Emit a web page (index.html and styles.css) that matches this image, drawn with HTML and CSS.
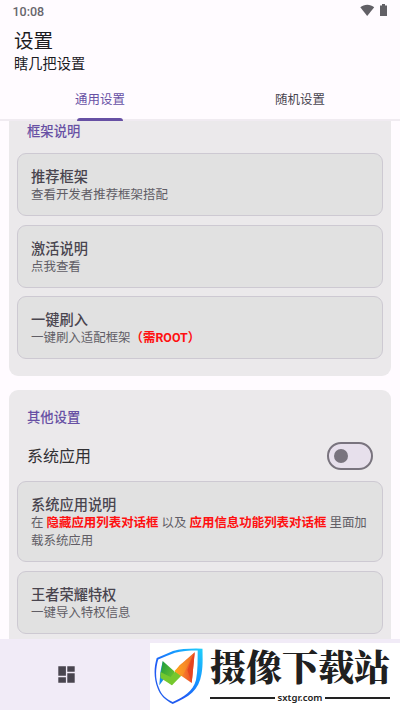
FILE: index.html
```html
<!DOCTYPE html>
<html lang="zh-CN">
<head>
<meta charset="utf-8">
<title>设置</title>
<link rel="stylesheet" href="styles.css">
</head>
<body>
<div class="screen">
  <header class="header">
    <div class="status">
      <span class="time">10:08</span>
      <svg class="status-icons" width="28" height="14" viewBox="0 0 28 14">
        <path d="M.3 3.300C4-.1 10.500-.1 14.200 3.300L7.200 12Z" fill="#626066"/>
        <path d="M20 1.400h2V0h3v1.400h2V12h-7z" fill="#626066"/>
      </svg>
    </div>
    <h1 class="title">设置</h1>
    <p class="subtitle">瞎几把设置</p>
    <nav class="tabs">
      <div class="tab active">通用设置</div>
      <div class="tab">随机设置</div>
    </nav>
  </header>
  <main class="content">
    <section class="card card-first">
      <h2 class="section-title">框架说明</h2>
      <div class="items">
        <div class="item"><h3>推荐框架</h3><p>查看开发者推荐框架搭配</p></div>
        <div class="item"><h3>激活说明</h3><p>点我查看</p></div>
        <div class="item"><h3>一键刷入</h3><p>一键刷入适配框架<b>（需ROOT）</b></p></div>
      </div>
    </section>
    <section class="card card-second">
      <h2 class="section-title">其他设置</h2>
      <div class="switch-row"><span>系统应用</span><div class="switch"><i></i></div></div>
      <div class="items">
        <div class="item"><h3>系统应用说明</h3><p>在 <b>隐藏应用列表对话框</b> 以及 <b>应用信息功能列表对话框</b> 里面加载系统应用</p></div>
        <div class="item"><h3>王者荣耀特权</h3><p>一键导入特权信息</p></div>
      </div>
    </section>
  </main>
  <footer class="bottom">
    <div class="nav-item">
      <svg width="17" height="17" viewBox="0 0 17 17" fill="#49454f">
        <path d="M.3.300h7.600v9.400H.3zM9.300.300h7.400v5.500H9.300zM.3 11.200h7.600v5.500H.3zM9.300 7.200h7.400v9.500H9.300z"/>
      </svg>
    </div>
    <div class="brand">
      <svg class="shield" width="50" height="57" viewBox="0 0 50 57">
        <defs>
          <linearGradient id="edge" x1="0" y1="1" x2="1" y2="0"><stop offset="0" stop-color="#2264e8"/><stop offset=".35" stop-color="#2159f5"/><stop offset=".65" stop-color="#1594ff"/><stop offset="1" stop-color="#20d0fa"/></linearGradient>
          <linearGradient id="warm" x1="0" y1="0" x2="1" y2="0"><stop offset="0" stop-color="#ffa01c"/><stop offset=".5" stop-color="#f4762a"/><stop offset="1" stop-color="#e63a22"/></linearGradient>
          <linearGradient id="leaf" x1="0" y1="0" x2="1" y2="1"><stop offset="0" stop-color="#189a3e"/><stop offset="1" stop-color="#7fcc2b"/></linearGradient>
        </defs>
        <path fill="url(#edge)" fill-rule="evenodd" d="M2.700 10Q11 6.500 19 3 31 0 48.500.7C48.600 10 49 18 47.500 26 45 42 35 49 18.700 56 11 52 6 47 3.500 40 0 31-.5 21 2.700 10zM4.200 11.500C1.500 21 1 31 5 40 7.500 47 12 51 18.700 54 30 49 39 43 42 32 44 22 43.500 12 43.700 2.500 35 2.500 27 3 21 4.700Q12 8 4.200 11.500z"/>
        <path fill="#178ce8" d="M8.700 13 6.500 23.500 5.300 37.300 10 31z"/>
        <path fill="url(#leaf)" d="M8.700 13 20.500 23.500 18 37.300 6.500 28z"/>
        <path fill="#75c82e" d="m6.500 24 10 5 5-6 6.500 4-10 10.300L6.500 30z"/>
        <path fill="#ffb01f" d="m20.500 23 7.200-7.500L27 28z"/>
        <path fill="url(#warm)" d="M40.700 4.300 25.500 17.500 21 23.500 37.700 35z"/>
        <path fill="#e64520" d="M40.700 4.300 33.500 22 37.700 35z"/>
        <path fill="#ffb51f" d="m21 23.500 7.500 4.500L40.700 4.300 27 17z" opacity=".35"/>
      </svg>
      <div class="brand-text">
        <div class="brand-name">摄像下载站</div>
        <div class="brand-url"><span>sxtgr.com</span></div>
      </div>
    </div>
  </footer>
</div>
</body>
</html>
```

FILE: styles.css
```css
* { box-sizing: border-box; }
body, h1, h2, h3, p { margin: 0; }
body {
  font-family: Roboto, "Noto Sans CJK SC", sans-serif;
  background: #fffbff;
  overflow: hidden;
}
.screen { width: 400px; height: 710px; display: flex; flex-direction: column; overflow: hidden; }
.header { height: 121px; flex: none; border-bottom: 2px solid #f0ebf1; }
.status { height: 29px; padding: 4px 12px 0 12.500px; display: flex; justify-content: space-between; }
.time { font-size: 12.500px; line-height: 15px; font-weight: 500; color: #68666c; }
.title { padding-left: 14px; font-size: 19.560px; line-height: 26px; font-weight: 400; color: #1c1b1f; }
.subtitle { padding-left: 14px; font-size: 14.220px; line-height: 18px; color: #1c1b1f; }
.tabs { display: flex; height: 48px; }
.tab { flex: 1; position: relative; text-align: center; font-size: 12.440px; line-height: 54px; color: #49454f; }
.active { color: #6750a4; }
.active::after { content: ""; position: absolute; left: 77px; top: 45px; width: 46px; height: 3px; border-radius: 3px 3px 0 0; background: #6750a4; }
.content { flex: 1; min-height: 0; overflow: hidden; padding: 0 9px; }
.card { background: #ebe9eb; border-radius: 9px; padding: 0 8px; }
.card-first { height: 255px; border-radius: 0 0 9px 9px; }
.card-second { height: 260px; margin-top: 14px; border-radius: 9px 9px 0 0; }
.section-title { padding-left: 10px; font-size: 13.330px; line-height: 20px; font-weight: 500; color: #6750a4; }
.card-first .section-title { padding-top: 1px; height: 32px; }
.card-second .section-title { padding-top: 18px; height: 46px; }
.items { display: flex; flex-direction: column; gap: 8.500px; }
.item { min-height: 63px; padding: 14px 13px 11px; border: 1px solid #cdc9d2; border-radius: 9px; background: #e1e1e1; }
.item h3 { font-size: 14.220px; line-height: 18px; font-weight: 500; color: #49454f; }
.item p { font-size: 12.440px; line-height: 18px; color: #605d65; }
.item b { color: #ff1010; font-weight: 700; }
.switch-row { height: 45px; padding: 6px 10px 0 10px; display: flex; justify-content: space-between; font-size: 16px; line-height: 30px; color: #313033; }
.switch { width: 46px; height: 28px; border: 2px solid #79747e; border-radius: 14px; background: #e7e0ec; display: flex; align-items: center; padding-left: 5px; }
.switch i { width: 14px; height: 14px; border-radius: 50%; background: #79747e; }
.bottom { height: 71px; flex: none; background: #f1ebf7; display: flex; justify-content: space-between; }
.nav-item { padding: 27px 0 0 58px; }
.brand { width: 250px; height: 67px; margin-top: 4px; background: #fff; display: flex; padding: 5px 0 0 4px; }
.shield { flex: none; }
.brand-text { width: 180px; margin-left: 6px; }
.brand-name { height: 43px; font-family: "Noto Serif CJK SC", "Noto Sans CJK SC", serif; font-size: 36px; line-height: 36px; font-weight: 900; color: #202020; white-space: nowrap; }
.brand-url { display: flex; align-items: center; gap: 3px; font-family: "Noto Sans", sans-serif; font-size: 9.500px; line-height: 14px; font-weight: 600; color: #222; }
.brand-url::before, .brand-url::after { content: ""; flex: 1; height: 2px; background: #222; }
```
